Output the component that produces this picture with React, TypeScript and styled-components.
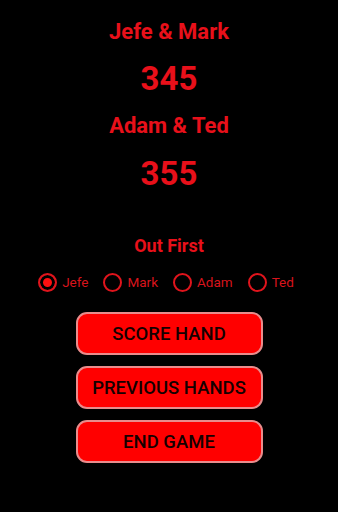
import { useState } from "react";
import styled, { createGlobalStyle } from "styled-components";

const players = ["Jefe", "Mark", "Adam", "Ted"];

const GlobalStyle = createGlobalStyle`
  html, body {
    margin: 0;
    padding: 0;
    background: #000;
  }
  body {
    font-family: Roboto, "Liberation Sans", sans-serif;
  }
`;

const App = () => {
  const [outFirst, setOutFirst] = useState<string>("Jefe");

  return (
    <Page>
      <GlobalStyle />
      <TeamName>Jefe &amp; Mark</TeamName>
      <Score>345</Score>
      <TeamName $top={14}>Adam &amp; Ted</TeamName>
      <Score $top={15}>355</Score>
      <SectionTitle>Out First</SectionTitle>
      <RadioRow>
        {players.map((p) => (
          <RadioLabel key={p}>
            <Radio
              type="radio"
              name="outFirst"
              checked={outFirst === p}
              onChange={() => setOutFirst(p)}
            />
            {p}
          </RadioLabel>
        ))}
      </RadioRow>
      <Actions>
        <ActionButton>SCORE HAND</ActionButton>
        <ActionButton>PREVIOUS HANDS</ActionButton>
        <ActionButton>END GAME</ActionButton>
      </Actions>
    </Page>
  );
};

export default App;

const Page = styled.div`
  width: 338px;
  min-height: 512px;
  background: #000;
  display: flex;
  flex-direction: column;
  align-items: center;
  padding-top: 19px;
  box-sizing: border-box;
`;

const TeamName = styled.div<{ $top?: number }>`
  margin-top: ${({ $top }) => $top ?? 0}px;
  font-size: 22px;
  line-height: 26px;
  font-weight: 700;
  color: #e8101a;
`;

const Score = styled.div<{ $top?: number }>`
  margin-top: ${({ $top }) => $top ?? 14}px;
  font-size: 33px;
  line-height: 40px;
  font-weight: 700;
  color: #e8101a;
`;

const SectionTitle = styled.div`
  margin-top: 41px;
  font-size: 18px;
  line-height: 22px;
  font-weight: 700;
  color: #e8101a;
`;

const RadioRow = styled.div`
  margin-top: 15px;
  margin-right: 6px;
  display: flex;
  align-items: center;
  gap: 15px;
  height: 20px;
`;

const RadioLabel = styled.label`
  display: flex;
  align-items: center;
  gap: 5px;
  font-size: 13.5px;
  color: #d8141c;
  cursor: pointer;
`;

const Radio = styled.input`
  appearance: none;
  margin: 0;
  width: 19px;
  height: 19px;
  border: 2px solid #e0141c;
  border-radius: 50%;
  box-sizing: border-box;
  background: #000;
  cursor: pointer;

  &:checked {
    background: #ff1010;
    box-shadow: inset 0 0 0 3px #000;
  }
`;

const Actions = styled.div`
  margin-top: 20px;
  display: flex;
  flex-direction: column;
  gap: 11px;
`;

const ActionButton = styled.button`
  width: 187px;
  height: 43px;
  background: #ff0000;
  border: 2px solid #e88c8c;
  border-radius: 11px;
  color: #140000;
  font-family: Roboto, "Liberation Sans", sans-serif;
  font-size: 18.5px;
  font-weight: 500;
  padding: 0;
  cursor: pointer;
`;
